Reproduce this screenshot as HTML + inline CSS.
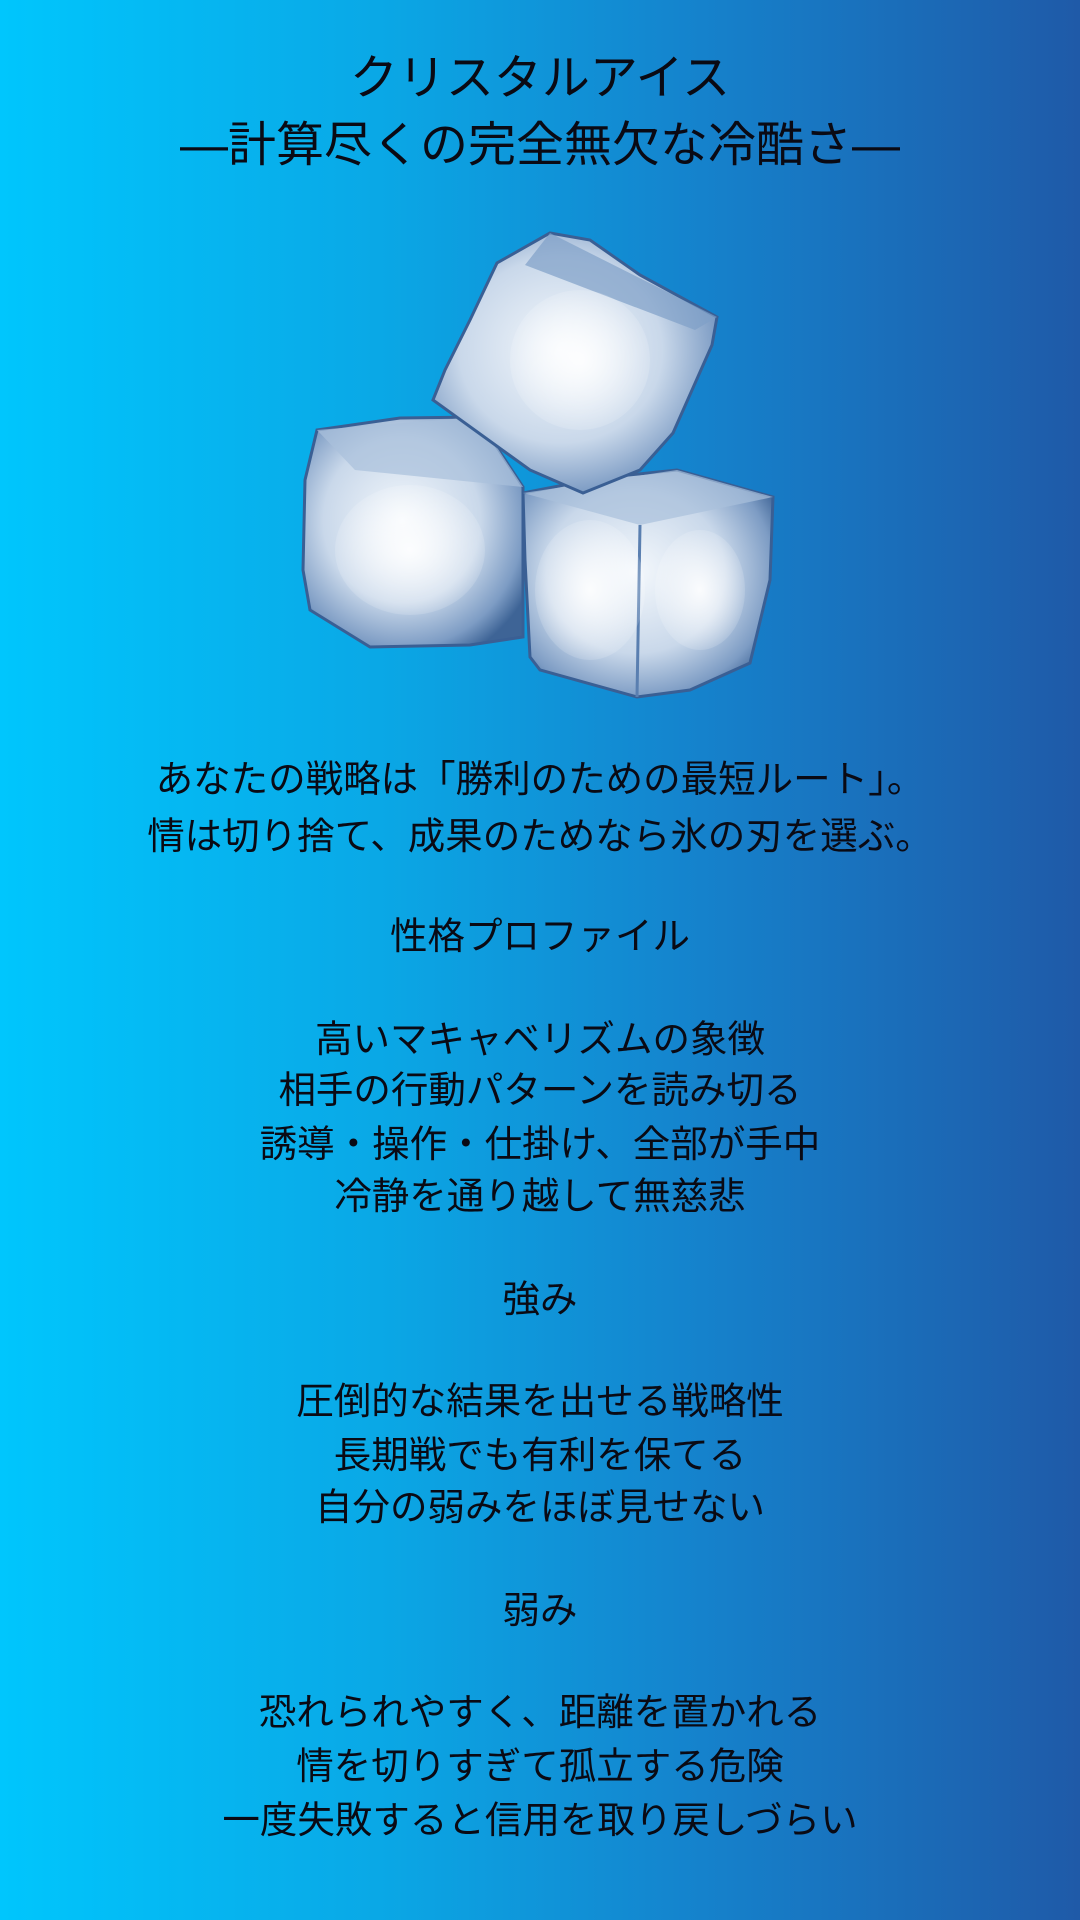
<!DOCTYPE html>
<html><head><meta charset="utf-8"><style>
html,body{margin:0;padding:0}
body{width:1080px;height:1920px;position:relative;overflow:hidden;
background:linear-gradient(90deg,#00c6fd 0%,#0aa8e6 35%,#1582cc 65%,#1f5aa8 100%);
font-family:"Liberation Sans","Noto Sans CJK JP",sans-serif;color:#0a0a14}
.t{position:absolute;left:0;width:1080px;text-align:center;white-space:nowrap;line-height:1.2}
.h{font-size:48px}
.b{font-size:37.5px}
</style></head><body>
<div class="t h" style="top:50px">クリスタルアイス</div>
<div class="t h" style="top:117px">―計算尽くの完全無欠な冷酷さ―</div>

<svg style="position:absolute;left:0;top:0" width="1080" height="760">
<defs>
<radialGradient id="g" cx="0.45" cy="0.45" r="0.65">
<stop offset="0" stop-color="#f4f8fc"/><stop offset="0.55" stop-color="#c9d8ea"/><stop offset="0.85" stop-color="#7d9cc4"/><stop offset="1" stop-color="#3e6496"/>
</radialGradient>
<radialGradient id="g2" cx="0.5" cy="0.5" r="0.6">
<stop offset="0" stop-color="#ffffff" stop-opacity="0.9"/><stop offset="1" stop-color="#ffffff" stop-opacity="0"/>
</radialGradient>
</defs>
<polygon points="317,430 400,418 477,417 523,487 523,637 470,645 370,647 310,610 303,570 305,480" fill="url(#g)" stroke="#3a5f94" stroke-width="3"/>
<polygon points="317,430 477,417 523,487 355,470" fill="#a9c0dc" opacity="0.7"/>
<ellipse cx="410" cy="550" rx="75" ry="65" fill="url(#g2)"/>
<polygon points="523,493 600,478 677,470 773,497 770,580 750,663 690,690 637,697 540,670 530,657 525,560" fill="url(#g)" stroke="#3a5f94" stroke-width="3"/>
<polygon points="523,493 677,470 773,497 640,525" fill="#a9c0dc" opacity="0.7"/>
<line x1="640" y1="525" x2="637" y2="697" stroke="#5a7fb0" stroke-width="3"/>
<ellipse cx="590" cy="590" rx="55" ry="70" fill="url(#g2)"/>
<ellipse cx="700" cy="590" rx="45" ry="60" fill="url(#g2)"/>
<polygon points="550,233 590,240 640,275 717,317 712,345 673,433 640,470 583,493 530,470 433,400 445,370 470,320 497,263" fill="url(#g)" stroke="#3a5f94" stroke-width="3"/>
<polygon points="550,233 717,317 695,330 525,265" fill="#7f9fc8" opacity="0.7"/>
<ellipse cx="580" cy="360" rx="70" ry="70" fill="url(#g2)"/>
</svg>

<div class="t b" style="top:757px">あなたの戦略は「勝利のための最短ルート」。</div>
<div class="t b" style="top:814px">情は切り捨て、成果のためなら氷の刃を選ぶ。</div>
<div class="t b" style="top:914px">性格プロファイル</div>
<div class="t b" style="top:1017px">高いマキャベリズムの象徴</div>
<div class="t b" style="top:1068px">相手の行動パターンを読み切る</div>
<div class="t b" style="top:1122px">誘導・操作・仕掛け、全部が手中</div>
<div class="t b" style="top:1174px">冷静を通り越して無慈悲</div>
<div class="t b" style="top:1277px">強み</div>
<div class="t b" style="top:1379px">圧倒的な結果を出せる戦略性</div>
<div class="t b" style="top:1433px">長期戦でも有利を保てる</div>
<div class="t b" style="top:1485px">自分の弱みをほぼ見せない</div>
<div class="t b" style="top:1588px">弱み</div>
<div class="t b" style="top:1690px">恐れられやすく、距離を置かれる</div>
<div class="t b" style="top:1744px">情を切りすぎて孤立する危険</div>
<div class="t b" style="top:1798px">一度失敗すると信用を取り戻しづらい</div>
</body></html>
